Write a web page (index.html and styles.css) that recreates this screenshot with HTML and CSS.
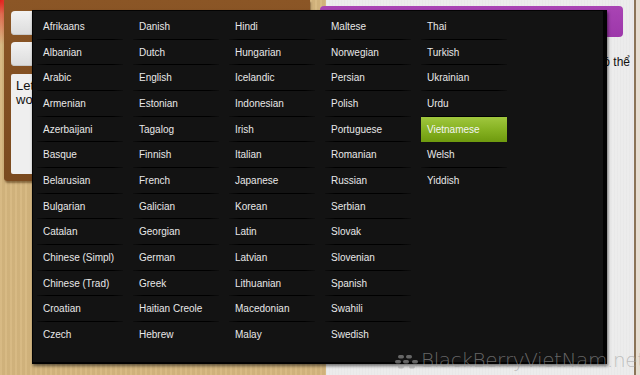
FILE: index.html
```html
<!DOCTYPE html>
<html>
<head>
<meta charset="utf-8">
<link rel="stylesheet" href="styles.css">
</head>
<body>
<div class="screen">
  <div class="left">
    <div class="glow"></div>
    <div class="frame">
      <div class="btn"></div>
      <div class="btn"></div>
      <div class="textbox">Let<br>wo</div>
    </div>
  </div>
  <div class="right">
    <div class="purple"></div>
    <p class="note">có thể</p>
  </div>
  <div class="edge"></div>

  <div class="dialog">
    <ul class="langs">
      <li>Afrikaans</li><li>Albanian</li><li>Arabic</li><li>Armenian</li><li>Azerbaijani</li><li>Basque</li><li>Belarusian</li><li>Bulgarian</li><li>Catalan</li><li>Chinese (Simpl)</li><li>Chinese (Trad)</li><li>Croatian</li><li>Czech</li>
      <li>Danish</li><li>Dutch</li><li>English</li><li>Estonian</li><li>Tagalog</li><li>Finnish</li><li>French</li><li>Galician</li><li>Georgian</li><li>German</li><li>Greek</li><li>Haitian Creole</li><li>Hebrew</li>
      <li>Hindi</li><li>Hungarian</li><li>Icelandic</li><li>Indonesian</li><li>Irish</li><li>Italian</li><li>Japanese</li><li>Korean</li><li>Latin</li><li>Latvian</li><li>Lithuanian</li><li>Macedonian</li><li>Malay</li>
      <li>Maltese</li><li>Norwegian</li><li>Persian</li><li>Polish</li><li>Portuguese</li><li>Romanian</li><li>Russian</li><li>Serbian</li><li>Slovak</li><li>Slovenian</li><li>Spanish</li><li>Swahili</li><li>Swedish</li>
      <li>Thai</li><li>Turkish</li><li>Ukrainian</li><li>Urdu</li><li class="active">Vietnamese</li><li>Welsh</li><li class="last">Yiddish</li>
    </ul>
  </div>

  <div class="watermark">
    <svg class="bb" width="24" height="14" viewBox="0 0 24 14">
      <rect x="3" y="0" width="6" height="3.5" rx="1.7"/>
      <rect x="11" y="0" width="6" height="3.5" rx="1.7"/>
      <rect x="0" y="5" width="6" height="3.5" rx="1.7"/>
      <rect x="8" y="5" width="6" height="3.5" rx="1.7"/>
      <rect x="17" y="5" width="6" height="3.5" rx="1.7"/>
      <rect x="3" y="10" width="6" height="3.5" rx="1.7"/>
      <rect x="14" y="10" width="6" height="3.5" rx="1.7"/>
    </svg>
    <span class="wm-text">BlackBerryVietNam.net</span>
  </div>
</div>
</body>
</html>
```
FILE: styles.css
```css
* { box-sizing: border-box; }
html, body { margin: 0; padding: 0; }
body { width: 640px; height: 375px; overflow: hidden; font-family: "Liberation Sans", Arial, sans-serif; }

.screen {
  position: relative;
  width: 640px;
  height: 375px;
  display: flex;
  overflow: hidden;
}

.left {
  position: relative;
  width: 326px;
  height: 375px;
  background: #d6b77f;
  background-image: repeating-linear-gradient(90deg, rgba(255,255,255,0.04) 0 2px, rgba(0,0,0,0.03) 2px 5px);
  padding: 0 16px 0 4px;
}
.glow {
  position: absolute;
  left: 0; top: 0;
  width: 60px; height: 60px;
  background: radial-gradient(circle at 0 0, rgba(230,20,20,0.95) 0, rgba(230,30,30,0.5) 14px, rgba(230,40,40,0) 45px);
  pointer-events: none;
}
.frame {
  position: relative;
  height: 181px;
  background: linear-gradient(180deg, #8b5626, #7a4a1f);
  border-radius: 0 0 3px 3px;
  box-shadow: 1px 2px 2px rgba(60,30,0,0.5);
  padding: 11px 0 7px 7px;
  display: flex;
  flex-direction: column;
  gap: 7px;
}
.btn {
  height: 24px;
  border-radius: 4px;
  background: linear-gradient(180deg, #f2f2f2, #dcdcdc);
  box-shadow: inset 0 -1px 0 #c8c8c8;
}
.textbox {
  flex: 1;
  background: #efefef;
  border-radius: 2px;
  padding: 5px 0 0 5px;
  font-size: 13px;
  line-height: 14px;
  color: #111;
  margin-top: 1px;
}

.right {
  position: relative;
  width: 308px;
  height: 375px;
  background: #ececec;
  background-image: repeating-linear-gradient(90deg, rgba(0,0,0,0.015) 0 1px, transparent 1px 3px);
  padding-top: 6px;
}
.purple {
  width: 303px;
  height: 31px;
  margin-left: -6px;
  background: linear-gradient(180deg, #a944b4, #9d38aa);
  border-radius: 4px;
}
.note {
  margin: 18px 0 0;
  text-align: right;
  padding-right: 4px;
  font-size: 12px;
  color: #111;
}
.edge {
  width: 6px;
  height: 375px;
  background: #e6ddd0;
  border-left: 2px solid #8a7458;
}

.dialog {
  position: absolute;
  left: 32px;
  top: 10px;
  width: 575px;
  height: 354px;
  background: #131313;
  border: 1px solid #030303;
  border-right-width: 4px;
  border-bottom-width: 2px;
  box-shadow: 1px 2px 3px rgba(0,0,0,0.55);
  padding: 3px 0 0 4px;
}
.langs {
  list-style: none;
  margin: 0;
  padding: 0;
  display: grid;
  grid-auto-flow: column;
  grid-template-rows: repeat(13, 25.67px);
  grid-template-columns: repeat(5, 86px);
  column-gap: 10px;
}
.langs li {
  padding-left: 6px;
  font-size: 10px;
  line-height: 25.67px;
  color: #e8e8e8;
  white-space: nowrap;
  background-image: linear-gradient(90deg, rgba(0,0,0,0.3), #000 12%, #000 88%, rgba(0,0,0,0.3));
  background-size: 100% 1px;
  background-repeat: no-repeat;
  background-position: left bottom;
}
.langs li:nth-child(13n), .langs li.last {
  background-image: none;
}
.langs li.active {
  background-image: linear-gradient(180deg, #a0c73e, #84b020 55%, #6e9a0e);
  background-size: 100% 100%;
  color: #f4f4f4;
}

.watermark {
  position: absolute;
  left: 395px;
  top: 348px;
  display: flex;
  align-items: center;
  gap: 2px;
  color: rgba(158,158,158,0.6);
  white-space: nowrap;
}
.bb { fill: rgba(158,158,158,0.6); margin-top: 3px; }
.wm-text {
  font-family: "DejaVu Sans", sans-serif;
  font-weight: 200;
  font-size: 20px;
  line-height: 24px;
  letter-spacing: -0.4px;
}
```
